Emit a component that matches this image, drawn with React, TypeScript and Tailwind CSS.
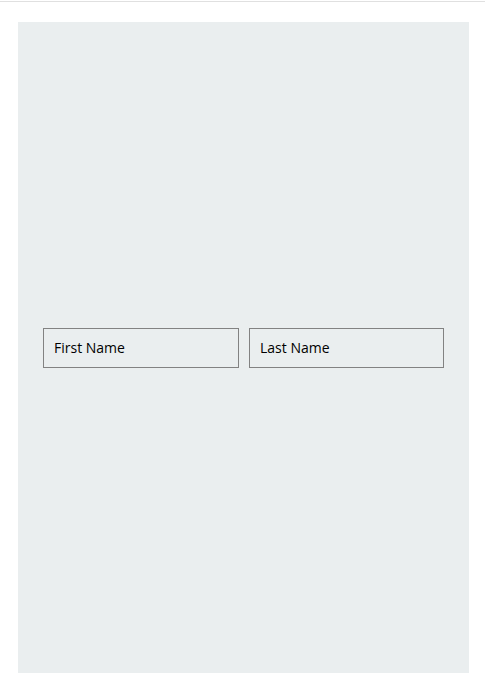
import React from 'react';

const App = () => {
  return (
    <div className="w-[485px] h-[686px] bg-white font-['Open_Sans','Noto_Sans',sans-serif]">
      <div className="h-px mt-px bg-[#e0e0e0]"></div>
      <div className="pt-[20px] px-[18px]">
        <div className="h-[651px] w-[451px] bg-[#eaeeef] flex items-center px-[25px] gap-[10px]">
          <input
            placeholder="First Name"
            className="w-[196px] h-[40px] border border-[#828282] bg-transparent px-[10px] text-[14px] text-black placeholder:text-black outline-none"
          />
          <input
            placeholder="Last Name"
            className="w-[195px] h-[40px] border border-[#828282] bg-transparent px-[10px] text-[14px] text-black placeholder:text-black outline-none"
          />
        </div>
      </div>
    </div>
  );
};

export default App;
